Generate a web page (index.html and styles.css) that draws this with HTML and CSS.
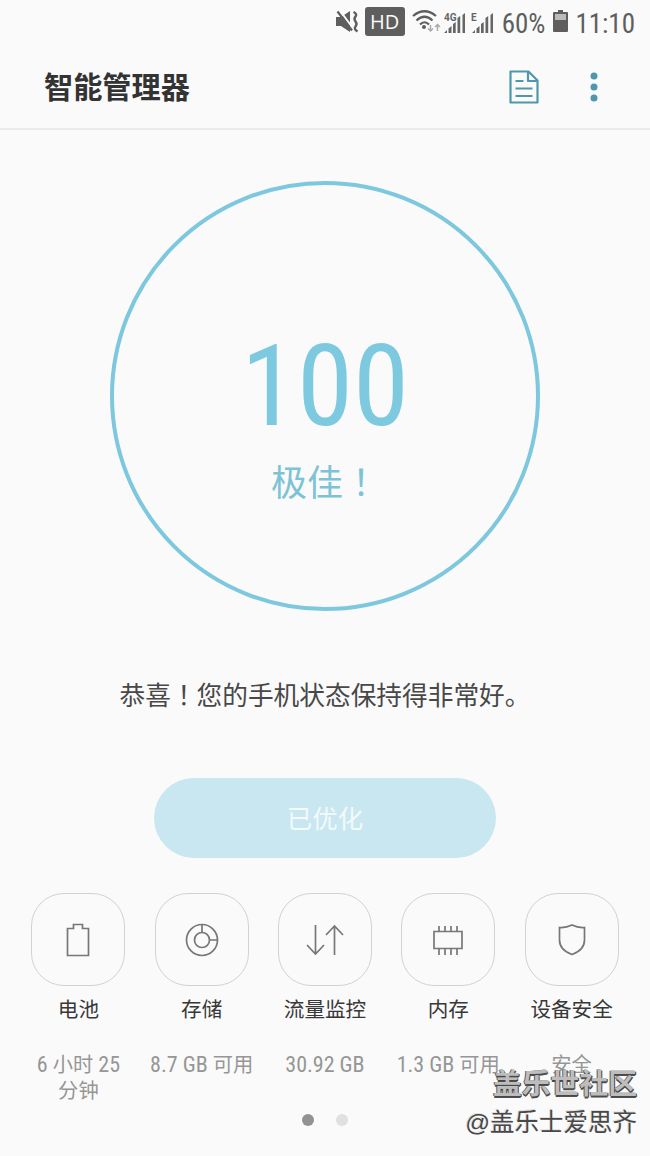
FILE: index.html
```
<!DOCTYPE html>
<html lang="zh-CN">
<head>
<meta charset="utf-8">
<title>智能管理器</title>
<link rel="stylesheet" href="styles.css">
</head>
<body>
<div class="screen">
  <div class="status">
    <svg class="mute" width="24" height="24" viewBox="0 0 24 24"><path d="M0 7h5l9-6v21l-9-6H0z" fill="#5e5e5e"/><path d="M3.500 0l14 19" stroke="#fafafa" stroke-width="2"/><path d="M1.500 1.500l14.500 19" fill="none" stroke="#5e5e5e" stroke-width="2.200"/><path d="M17.500 2q4 2 2 4.500t0 5t0 5t2 5" fill="none" stroke="#5e5e5e" stroke-width="2.400"/></svg>
    <span class="hd">HD</span>
    <svg class="wifi" width="30" height="26" viewBox="0 0 30 26"><g fill="none" stroke="#5e5e5e" stroke-width="2.200"><path d="M1 6Q12.500-3.500 24 6M4.500 10.500Q12.500 3 20.500 10.500M8 14.500Q12.500 10 17 14.500"/></g><circle cx="12" cy="17" r="2" fill="#5e5e5e"/><path d="M18.500 15v6M16 18.500l2.500 2.500 2.500-2.500M25.500 21v-6M23 17l2.500-2.500 2.500 2.500" fill="none" stroke="#aaa" stroke-width="1.500"/></svg>
    <svg class="sig1" width="23" height="24" viewBox="0 0 23 24"><text x="0" y="9" class="net">4G</text><path d="M0 21l3-3v3zM4.500 16.500L7.500 14v7h-3zM9 12l2.700-2v11H9zM13.500 6L16.200 4v17h-2.700zM18.500 3L21 1v20h-2.500z" fill="#666"/></svg>
    <svg class="sig2" width="23" height="24" viewBox="0 0 23 24"><text x="0" y="9" class="net">E</text><path d="M1 21l3-3v3zM5.500 16.500L8.500 14v7h-3zM10 12l2.700-2v11H10zM14.500 6L17.200 4v17h-2.700zM19.500 3L22 1v20h-2.500z" fill="#666"/></svg>
    <span class="pct">60%</span>
    <svg class="batt" width="15" height="23" viewBox="0 0 15 23"><path d="M5 0h5v2h4a1 1 0 0 1 1 1v18a1 1 0 0 1-1 1H1a1 1 0 0 1-1-1V3a1 1 0 0 1 1-1h4z" fill="#5e5e5e"/><path d="M2 4h11v6H2z" fill="#bbb"/></svg>
    <span class="time">11:10</span>
  </div>
  <header class="header">
    <h1 class="title">智能管理器</h1>
    <svg class="doc" width="32" height="36" viewBox="0 0 32 36"><g fill="none" stroke="#4f98ab" stroke-width="2.200" stroke-linejoin="round"><path d="M2.500 2.500h18l9 9v22h-27zM20 3v9H29.500"/><path d="M7.500 12h8M7.500 19.500h17M7.500 27h17"/></g></svg>
    <svg class="more" width="8" height="30" viewBox="0 0 8 30"><g fill="#4f98ab"><circle cx="4" cy="4" r="3.500"/><circle cx="4" cy="15" r="3.500"/><circle cx="4" cy="26" r="3.500"/></g></svg>
  </header>
  <main class="main">
    <div class="ring">
      <div class="score">100</div>
      <div class="grade">极佳<span class="bang" lang="zh-TW">！</span></div>
    </div>
    <p class="message">恭喜<span class="bang" lang="zh-TW">！</span>您的手机状态保持得非常好。</p>
    <div class="button">已优化</div>
    <div class="tiles">
      <div class="item"><div class="tile"><svg width="40" height="40" viewBox="0 0 40 40"><path d="M9.500 8.500H15.500V4.500H24.500V8.500H30.500V35.500H9.500z"/></svg></div><div class="name">电池</div><div class="info">6 <span class="cjk">小时</span> 25<br><span class="cjk">分钟</span></div></div>
      <div class="item"><div class="tile"><svg width="40" height="40" viewBox="0 0 40 40"><circle cx="20" cy="20" r="15.500"/><circle cx="20" cy="20" r="7.500"/><path d="M20 4.500v8M27.500 20h8"/></svg></div><div class="name">存储</div><div class="info">8.7 GB <span class="cjk">可用</span></div></div>
      <div class="item"><div class="tile"><svg width="40" height="40" viewBox="0 0 40 40"><path d="M10.500 5v29M2 25l8.500 9 8.500-9M29.500 35V6M21 15l8.500-9 8.500 9"/></svg></div><div class="name">流量监控</div><div class="info">30.92 GB</div></div>
      <div class="item"><div class="tile"><svg width="40" height="40" viewBox="0 0 40 40"><path d="M6 11.500h28v17H6zM11 6v5.500M17 6v5.500M23 6v5.500M29 6v5.500M11 28.500V35M17 28.500V35M23 28.500V35M29 28.500V35"/></svg></div><div class="name">内存</div><div class="info">1.3 GB <span class="cjk">可用</span></div></div>
      <div class="item"><div class="tile"><svg width="40" height="40" viewBox="0 0 40 40"><path d="M7.500 7.500Q14 8 20 5Q26 8 32.500 7.500V20Q32.500 30 20 34.500Q7.500 30 7.500 20z"/></svg></div><div class="name">设备安全</div><div class="info"><span class="cjk">安全</span></div></div>
    </div>
    <div class="dots"><span class="dot on"></span><span class="dot"></span></div>
  </main>
  <div class="mark"><div class="mark-brand">盖乐世社区</div><div class="mark-user">@盖乐士爱思齐</div></div>
</div>
</body>
</html>
```
FILE: styles.css
```
* { box-sizing: border-box; }
body { margin: 0; background: #fafafa; font-family: "Roboto Condensed", Roboto, "Noto Sans CJK SC", sans-serif; font-stretch: 75%; }
.screen { position: relative; width: 650px; height: 1156px; overflow: hidden; }
.status { display: flex; height: 45px; padding: 10px 15px 0 0; justify-content: flex-end; align-items: flex-start; color: #5e5e5e; }
.mute { margin-right: 5px; }
.hd { width: 40px; height: 29px; margin: -3px 7px 0 0; border-radius: 3px; background: #5e5e5e; color: #fafafa; font: 20px/29px "Open Sans", sans-serif; text-align: center; }
.wifi { margin-right: 2px; }
.sig1 { margin: 2px 4px 0 0; }
.sig2 { margin: 2px 8px 0 0; }
.net { font: bold 10px Roboto, sans-serif; fill: #666; }
.pct, .time { font-size: 27px; line-height: 28px; }
.pct { margin-right: 8px; }
.batt { margin-right: 7px; }
.header { display: flex; align-items: center; height: 85px; padding: 0 52px 0 44px; border-bottom: 2px solid #ebebeb; }
.title { flex: 1; margin: 3px 0 0; font-size: 29.2px; line-height: 40px; font-weight: 700; color: #333; }
.doc { margin-right: 50px; }
.main { display: flex; flex-direction: column; align-items: center; padding-top: 51px; }
.ring { width: 430px; height: 430px; border: 4px solid #7dc8de; border-radius: 50%; text-align: center; color: #7dcae0; padding-top: 134px; }
.score { font-size: 113.5px; line-height: 135px; font-weight: 380; }
.grade { font-size: 36px; line-height: 50px; margin-top: 5px; color: #7cc3d5; }
.bang { font-family: "Noto Sans CJK TC", sans-serif; line-height: 0; }
.message { margin: 65px 0 0; font-size: 25.7px; line-height: 40px; color: #484848; white-space: nowrap; }
.button { width: 342px; height: 80px; margin-top: 62px; border-radius: 40px; background: #c9e7f0; color: #f2fafc; font-size: 25.5px; line-height: 82px; text-align: center; }
.tiles { display: grid; grid-template-columns: repeat(5, 123.3px); margin-top: 35px; height: 212px; }
.item { display: flex; flex-direction: column; align-items: center; }
.tile { display: flex; align-items: center; justify-content: center; width: 94px; height: 93px; border: 1.5px solid #d2d2d2; border-radius: 33px; }
.tile svg { fill: none; stroke: #777; stroke-width: 1.7; }
.name { margin-top: 10px; font-size: 20.6px; line-height: 28px; color: #383838; }
.info { margin-top: 28px; font-size: 22px; line-height: 26px; color: #969696; text-align: center; white-space: nowrap; }
.cjk { font-size: 20.3px; line-height: 0; }
.dots { display: flex; gap: 22px; margin-top: 9px; }
.dot { width: 12px; height: 12px; border-radius: 50%; background: #e0e0e0; }
.dot.on { background: #929292; }
.mark { position: absolute; right: 13px; top: 1066px; text-align: right; font-family: "Liberation Sans", "Noto Sans CJK SC", sans-serif; font-stretch: normal; white-space: nowrap; }
.mark-brand { font-size: 28.8px; line-height: 36px; font-weight: 700; color: #bdbdbd; text-shadow: 1px 1px 0 #484848, 0 2px 0 #505050, -1px 0 0 #606060; }
.mark-user { margin-top: 3px; font-size: 24.5px; line-height: 36px; color: #484848; text-shadow: -1px -1px 0 #e0e0e0; }
```
